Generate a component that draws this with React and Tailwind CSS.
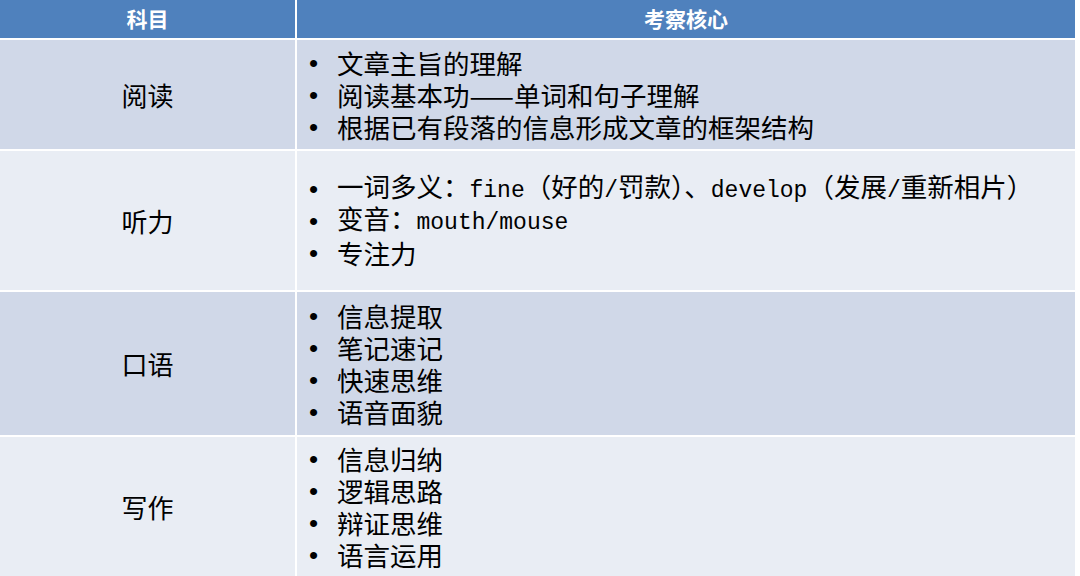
const rows = [
  {
    name: "阅读",
    bg: "bg-[#d0d8e8]",
    h: "h-[109px]",
    items: [
      ["文章主旨的理解"],
      ["阅读基本功——单词和句子理解"],
      ["根据已有段落的信息形成文章的框架结构"],
    ],
  },
  {
    name: "听力",
    bg: "bg-[#e9edf4]",
    h: "h-[139px]",
    items: [
      ["一词多义：", { m: "fine" }, "（好的", { m: "/" }, "罚款）、", { m: "develop" }, "（发展", { m: "/" }, "重新相片）"],
      ["变音：", { m: "mouth/mouse" }],
      ["专注力"],
    ],
  },
  {
    name: "口语",
    bg: "bg-[#d0d8e8]",
    h: "h-[143px]",
    items: [["信息提取"], ["笔记速记"], ["快速思维"], ["语音面貌"]],
  },
  {
    name: "写作",
    bg: "bg-[#e9edf4]",
    h: "h-[139px]",
    items: [["信息归纳"], ["逻辑思路"], ["辩证思维"], ["语言运用"]],
  },
];

function Part({ p }) {
  if (typeof p === "string") return <span>{p}</span>;
  return <span className="font-['Liberation_Mono',monospace] text-[23px] leading-[32px]">{p.m}</span>;
}

export default function App() {
  return (
    <div className="w-[1080px] h-[576px] bg-white overflow-hidden font-['Noto_Sans_CJK_SC','Noto_Sans',sans-serif] text-black">
      <div className="w-[1075px] grid grid-cols-[295px_1fr] gap-x-[2px]">
        <div className="h-[38px] bg-[#4f81bd] flex items-center justify-center text-white text-[21px] font-bold">
          科目
        </div>
        <div className="h-[38px] bg-[#4f81bd] flex items-center justify-center text-white text-[21px] font-bold">
          考察核心
        </div>
        {rows.map((r) => (
          <div key={r.name} className="contents">
            <div className={`${r.h} ${r.bg} mt-[2px] flex items-center justify-center text-[26px]`}>
              {r.name}
            </div>
            <div className={`${r.h} ${r.bg} mt-[2px] flex flex-col justify-center pl-[12px] text-[26.5px]`}>
              {r.items.map((it, i) => (
                <div key={i} className="h-[32px] flex items-center whitespace-nowrap">
                  <span className="w-[28px] font-['Liberation_Sans',sans-serif] text-[26px] leading-none">•</span>
                  <span className="leading-[32px]">
                    {it.map((p, j) => (
                      <Part key={j} p={p} />
                    ))}
                  </span>
                </div>
              ))}
            </div>
          </div>
        ))}
      </div>
    </div>
  );
}
